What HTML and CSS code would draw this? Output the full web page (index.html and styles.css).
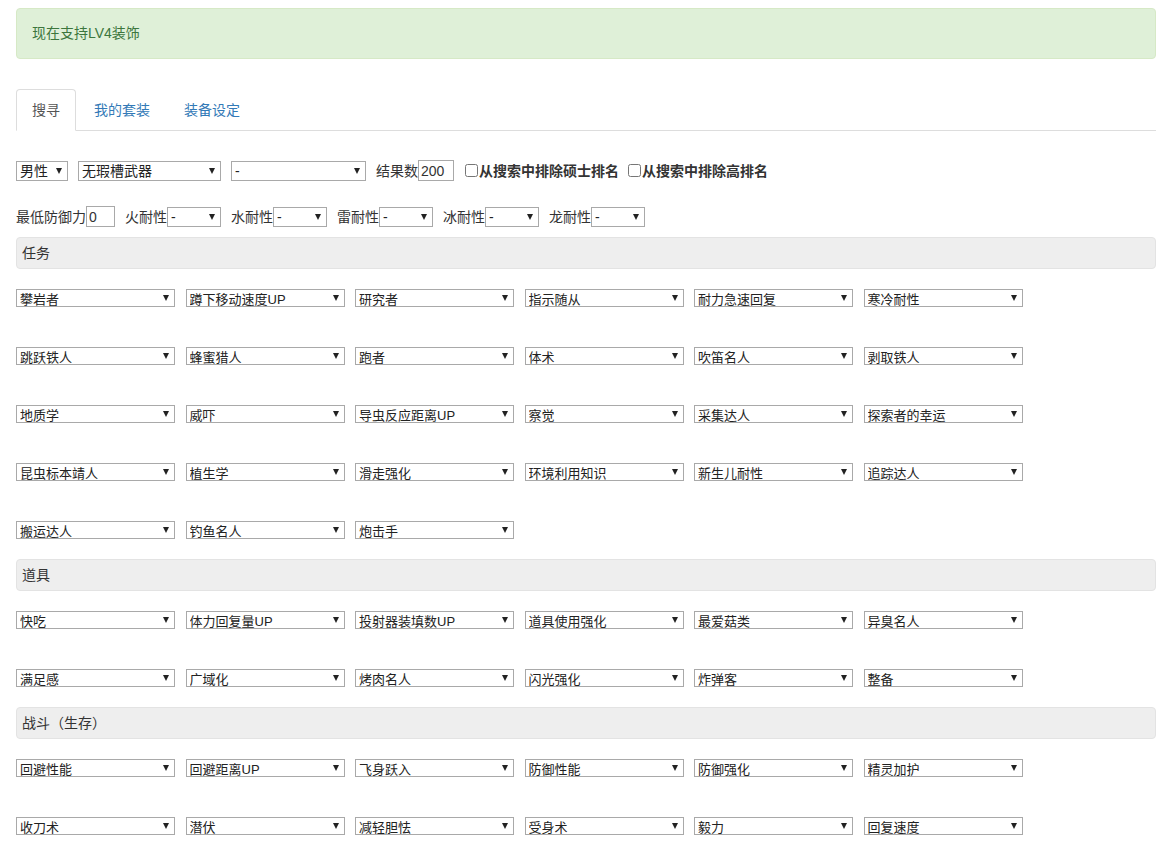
FILE: index.html
```html
<!DOCTYPE html>
<html lang="zh-CN">
<head>
<meta charset="utf-8">
<title>装备搜寻</title>
<link rel="stylesheet" href="styles.css">
</head>
<body>
<div class="page">
  <div class="alert">现在支持LV4装饰</div>

  <ul class="tabs">
    <li class="tab active"><a>搜寻</a></li>
    <li class="tab"><a>我的套装</a></li>
    <li class="tab"><a>装备设定</a></li>
  </ul>

  <div class="form-row row-top">
    <span class="sel sel-lg w-sex"><select><option>男性</option></select></span>
    <span class="sel sel-lg w-weapon"><select><option>无瑕槽武器</option></select></span>
    <span class="sel sel-lg w-dash"><select><option>-</option></select></span>
    <label class="lbl">结果数</label><input class="num w-res" type="text" value="200">
    <label class="chk"><input type="checkbox">从搜索中排除硕士排名</label>
    <label class="chk"><input type="checkbox">从搜索中排除高排名</label>
  </div>

  <div class="form-row row-res">
    <label class="lbl">最低防御力</label><input class="num w-def" type="text" value="0">
    <span class="grp"><label class="lbl">火耐性</label><span class="sel w-res-sel"><select><option>-</option></select></span></span>
    <span class="grp"><label class="lbl">水耐性</label><span class="sel w-res-sel"><select><option>-</option></select></span></span>
    <span class="grp"><label class="lbl">雷耐性</label><span class="sel w-res-sel"><select><option>-</option></select></span></span>
    <span class="grp"><label class="lbl">冰耐性</label><span class="sel w-res-sel"><select><option>-</option></select></span></span>
    <span class="grp"><label class="lbl">龙耐性</label><span class="sel w-res-sel"><select><option>-</option></select></span></span>
  </div>

  <div class="bar">任务</div>
  <div class="skills">
    <span class="sel"><select><option>攀岩者</option></select></span>
    <span class="sel"><select><option>蹲下移动速度UP</option></select></span>
    <span class="sel"><select><option>研究者</option></select></span>
    <span class="sel"><select><option>指示随从</option></select></span>
    <span class="sel"><select><option>耐力急速回复</option></select></span>
    <span class="sel"><select><option>寒冷耐性</option></select></span>
    <span class="sel"><select><option>跳跃铁人</option></select></span>
    <span class="sel"><select><option>蜂蜜猎人</option></select></span>
    <span class="sel"><select><option>跑者</option></select></span>
    <span class="sel"><select><option>体术</option></select></span>
    <span class="sel"><select><option>吹笛名人</option></select></span>
    <span class="sel"><select><option>剥取铁人</option></select></span>
    <span class="sel"><select><option>地质学</option></select></span>
    <span class="sel"><select><option>威吓</option></select></span>
    <span class="sel"><select><option>导虫反应距离UP</option></select></span>
    <span class="sel"><select><option>察觉</option></select></span>
    <span class="sel"><select><option>采集达人</option></select></span>
    <span class="sel"><select><option>探索者的幸运</option></select></span>
    <span class="sel"><select><option>昆虫标本靖人</option></select></span>
    <span class="sel"><select><option>植生学</option></select></span>
    <span class="sel"><select><option>滑走强化</option></select></span>
    <span class="sel"><select><option>环境利用知识</option></select></span>
    <span class="sel"><select><option>新生儿耐性</option></select></span>
    <span class="sel"><select><option>追踪达人</option></select></span>
    <span class="sel"><select><option>搬运达人</option></select></span>
    <span class="sel"><select><option>钓鱼名人</option></select></span>
    <span class="sel"><select><option>炮击手</option></select></span>
  </div>

  <div class="bar">道具</div>
  <div class="skills">
    <span class="sel"><select><option>快吃</option></select></span>
    <span class="sel"><select><option>体力回复量UP</option></select></span>
    <span class="sel"><select><option>投射器装填数UP</option></select></span>
    <span class="sel"><select><option>道具使用强化</option></select></span>
    <span class="sel"><select><option>最爱菇类</option></select></span>
    <span class="sel"><select><option>异臭名人</option></select></span>
    <span class="sel"><select><option>满足感</option></select></span>
    <span class="sel"><select><option>广域化</option></select></span>
    <span class="sel"><select><option>烤肉名人</option></select></span>
    <span class="sel"><select><option>闪光强化</option></select></span>
    <span class="sel"><select><option>炸弹客</option></select></span>
    <span class="sel"><select><option>整备</option></select></span>
  </div>

  <div class="bar">战斗（生存）</div>
  <div class="skills">
    <span class="sel"><select><option>回避性能</option></select></span>
    <span class="sel"><select><option>回避距离UP</option></select></span>
    <span class="sel"><select><option>飞身跃入</option></select></span>
    <span class="sel"><select><option>防御性能</option></select></span>
    <span class="sel"><select><option>防御强化</option></select></span>
    <span class="sel"><select><option>精灵加护</option></select></span>
    <span class="sel"><select><option>收刀术</option></select></span>
    <span class="sel"><select><option>潜伏</option></select></span>
    <span class="sel"><select><option>减轻胆怯</option></select></span>
    <span class="sel"><select><option>受身术</option></select></span>
    <span class="sel"><select><option>毅力</option></select></span>
    <span class="sel"><select><option>回复速度</option></select></span>
  </div>
</div>
</body>
</html>
```

FILE: styles.css
```css
* { box-sizing: border-box; }

html, body {
  margin: 0;
  padding: 0;
  background: #fff;
}

body {
  font-family: "Liberation Sans", "Noto Sans CJK SC", sans-serif;
  font-size: 14px;
  line-height: 20px;
  color: #333;
}

.page {
  padding: 8px 8px 40px 16px;
}

.alert {
  background: #dff0d8;
  border: 1px solid #d6e9c6;
  border-radius: 4px;
  color: #3c763d;
  padding: 15px;
  height: 51px;
  line-height: 19px;
}

.tabs {
  list-style: none;
  margin: 30px 0 0 0;
  padding: 0;
  display: flex;
  border-bottom: 1px solid #ddd;
}

.tab {
  margin-bottom: -1px;
}

.tab a {
  display: block;
  margin-right: 2px;
  padding: 10px 15px;
  line-height: 20px;
  border: 1px solid transparent;
  border-radius: 4px 4px 0 0;
  color: #337ab7;
  cursor: pointer;
}

.tab.active a {
  color: #555;
  background: #fff;
  border-color: #ddd;
  border-bottom-color: #fff;
}

.form-row {
  display: flex;
  align-items: center;
  height: 21px;
}

.row-top { margin-top: 29px; }
.row-res { margin-top: 25px; }

.lbl {
  color: #333;
  white-space: nowrap;
}

.grp {
  display: flex;
  align-items: center;
  margin-left: 10px;
}

/* select wrapper with drawn arrow */
.sel {
  position: relative;
  display: inline-block;
  height: 18px;
}

.sel select {
  -webkit-appearance: none;
  appearance: none;
  display: block;
  width: 100%;
  height: 100%;
  margin: 0;
  padding: 2px 16px 0 3px;
  border: 1px solid #a9a9a9;
  border-radius: 0;
  background: #fff;
  color: #222;
  font-family: "Liberation Sans", "Noto Sans CJK SC", sans-serif;
  font-size: 13px;
  line-height: 15px;
  outline: none;
}

.sel::after {
  content: "";
  position: absolute;
  right: 6px;
  top: 50%;
  margin-top: -3px;
  width: 0;
  height: 0;
  border-left: 3.5px solid transparent;
  border-right: 3.5px solid transparent;
  border-top: 6px solid #222;
  pointer-events: none;
}

.sel-lg { height: 20px; }
.sel-lg select { font-size: 14px; padding-top: 1px; }

.w-sex { width: 52px; }
.w-weapon { width: 143px; margin-left: 10px; }
.w-dash { width: 135px; margin-left: 10px; margin-right: 10px; }
.w-res-sel { width: 54px; height: 20px; }
.w-res-sel select { font-size: 14px; padding-top: 1px; }

.num {
  height: 21px;
  margin: 0;
  padding: 0 2px;
  border: 1px solid #a9a9a9;
  font-family: "Liberation Sans", "Noto Sans CJK SC", sans-serif;
  font-size: 14px;
  color: #333;
  outline: none;
}

.w-res { width: 36px; margin-right: 11px; }
.w-def { width: 29px; }

.chk {
  display: flex;
  align-items: center;
  font-weight: bold;
  color: #333;
  margin-right: 9px;
  white-space: nowrap;
}

.chk input {
  width: 13px;
  height: 13px;
  margin: 0 1px 0 0;
}

.bar {
  margin-top: 10px;
  height: 32px;
  background: #eee;
  border: 1px solid #e3e3e3;
  border-radius: 4px;
  padding: 5px 5px;
  line-height: 20px;
  color: #333;
}

.skills + .bar { margin-top: 0; }

.skills {
  display: grid;
  grid-template-columns: repeat(6, 159px);
  column-gap: 10.5px;
  row-gap: 40px;
  padding: 20px 0;
}

.skills .sel {
  width: 159px;
}
```
